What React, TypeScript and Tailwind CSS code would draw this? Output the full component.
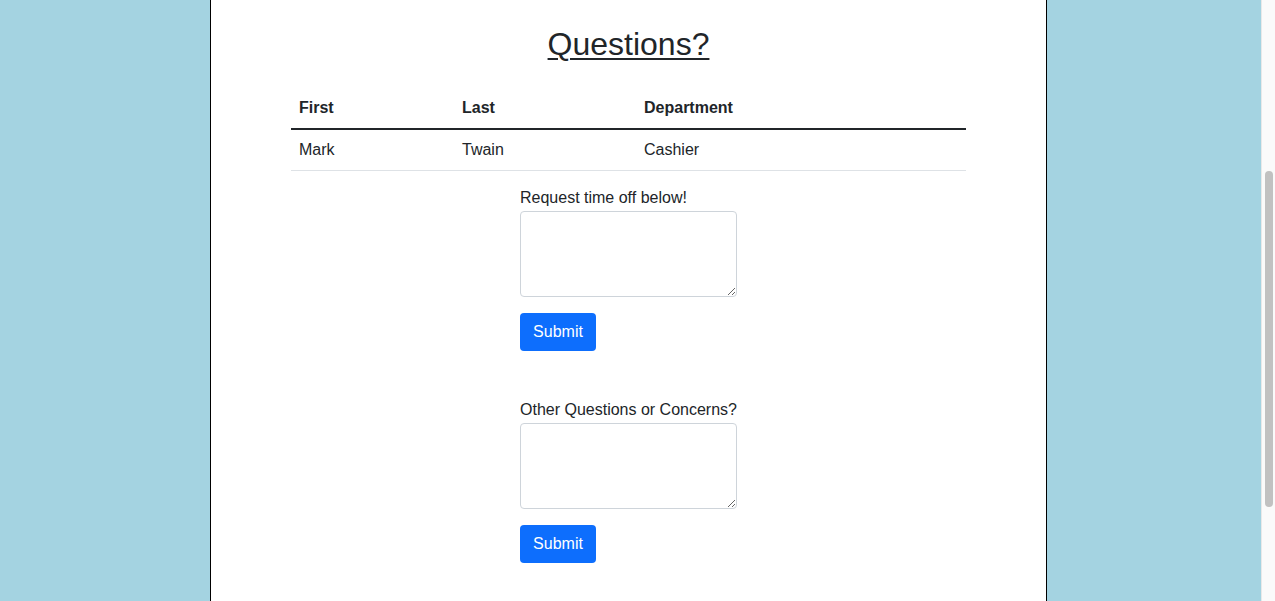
// Questions page — employee table plus two request forms.

const ROWS = [{ first: 'Mark', last: 'Twain', dept: 'Cashier' }];

const FORMS = ['Request time off below!', 'Other Questions or Concerns?'];

function RequestForm({ label, first }: { label: string; first: boolean }) {
  return (
    <form className={`w-[217px] mx-auto ${first ? 'mt-[15px]' : 'mt-[47px]'}`}>
      <label className="block leading-6">{label}</label>
      <textarea className="block w-[217px] h-[86px] mt-px border border-[#ced4da] rounded-[4px] bg-white px-2 py-1" />
      <button
        type="button"
        className="mt-4 w-[76px] h-[38px] rounded-[4px] bg-[#0d6efd] text-white leading-6"
      >
        Submit
      </button>
    </form>
  );
}

export default function App() {
  return (
    <div
      className="flex h-[601px] overflow-hidden bg-[#a4d3e1] text-[#212529] text-base"
      style={{ fontFamily: '"Liberation Sans", Arial, sans-serif' }}
    >
      <div className="flex-1">
        <div className="ml-[210px] w-[837px] h-full bg-white border-x border-black px-20">
          <h2 className="pt-[25px] text-[32px] leading-[38.4px] text-center">
            <span className="underline decoration-2 underline-offset-[3px]">Questions?</span>
          </h2>

          <table className="mt-[25px] w-full text-left border-collapse">
            <thead>
              <tr className="border-b-2 border-[#212529]">
                <th className="w-[163px] px-2 py-2 leading-6 font-bold">First</th>
                <th className="w-[182px] px-2 py-2 leading-6 font-bold">Last</th>
                <th className="px-2 py-2 leading-6 font-bold">Department</th>
              </tr>
            </thead>
            <tbody>
              {ROWS.map(r => (
                <tr key={r.first} className="border-b border-[#dee2e6]">
                  <td className="px-2 py-2 leading-6">{r.first}</td>
                  <td className="px-2 py-2 leading-6">{r.last}</td>
                  <td className="px-2 py-2 leading-6">{r.dept}</td>
                </tr>
              ))}
            </tbody>
          </table>

          {FORMS.map((f, i) => (
            <RequestForm key={f} label={f} first={i === 0} />
          ))}
        </div>
      </div>

      {/* fake scrollbar, page is scrolled down */}
      <div className="w-[14px] shrink-0 bg-[#fafafa] border-l border-[#e8e8e8] pt-[171px]">
        <div className="ml-[3px] w-[8px] h-[336px] rounded-full bg-[#c1c1c1]" />
      </div>
    </div>
  );
}
